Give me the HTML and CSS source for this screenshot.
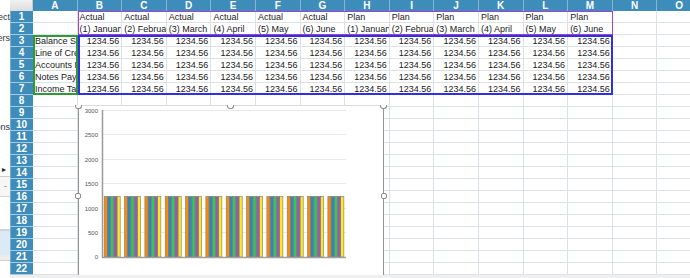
FILE: index.html
```html
<!DOCTYPE html>
<html>
<head>
<meta charset="utf-8">
<link rel="stylesheet" href="styles.css">
</head>
<body>
<div class="app">
  <aside class="side">
    <div class="gap g11"></div>
    <div class="frag"><span>Select</span></div>
    <div class="gap g9"></div>
    <div class="frag"><span>Filters</span></div>
    <div class="gap g77"></div>
    <div class="frag"><span>Options</span></div>
    <div class="gap g30"></div>
    <div class="arrow">&#9656;</div>
    <div class="pane-grey"><span class="dash"></span></div>
    <div class="pane-white"></div>
    <div class="pane-blue"></div>
    <div class="pane-light"></div>
  </aside>
  <main class="sheet">
    <div class="stack">
      <div class="grid cells">
        <div class="corner"></div>
        <div class="hd">A</div><div class="hd">B</div><div class="hd">C</div><div class="hd">D</div><div class="hd">E</div><div class="hd">F</div><div class="hd">G</div><div class="hd">H</div><div class="hd">I</div><div class="hd">J</div><div class="hd">K</div><div class="hd">L</div><div class="hd">M</div><div class="hd">N</div><div class="hd">O</div>

        <div class="rh">1</div>
        <div class="c"></div>
        <div class="c">Actual</div><div class="c">Actual</div><div class="c">Actual</div><div class="c">Actual</div><div class="c">Actual</div><div class="c">Actual</div>
        <div class="c">Plan</div><div class="c">Plan</div><div class="c">Plan</div><div class="c">Plan</div><div class="c">Plan</div><div class="c">Plan</div>
        <div class="c"></div><div class="c"></div>

        <div class="rh">2</div>
        <div class="c"></div>
        <div class="c">(1) January</div><div class="c">(2) February</div><div class="c">(3) March</div><div class="c">(4) April</div><div class="c">(5) May</div><div class="c">(6) June</div>
        <div class="c">(1) January</div><div class="c">(2) February</div><div class="c">(3) March</div><div class="c">(4) April</div><div class="c">(5) May</div><div class="c">(6) June</div>
        <div class="c"></div><div class="c"></div>

        <div class="rh">3</div>
        <div class="c">Balance Sheet</div>
        <div class="c num">1234.56</div><div class="c num">1234.56</div><div class="c num">1234.56</div><div class="c num">1234.56</div><div class="c num">1234.56</div><div class="c num">1234.56</div><div class="c num">1234.56</div><div class="c num">1234.56</div><div class="c num">1234.56</div><div class="c num">1234.56</div><div class="c num">1234.56</div><div class="c num">1234.56</div>
        <div class="c"></div><div class="c"></div>

        <div class="rh">4</div>
        <div class="c">Line of Credit</div>
        <div class="c num">1234.56</div><div class="c num">1234.56</div><div class="c num">1234.56</div><div class="c num">1234.56</div><div class="c num">1234.56</div><div class="c num">1234.56</div><div class="c num">1234.56</div><div class="c num">1234.56</div><div class="c num">1234.56</div><div class="c num">1234.56</div><div class="c num">1234.56</div><div class="c num">1234.56</div>
        <div class="c"></div><div class="c"></div>

        <div class="rh">5</div>
        <div class="c">Accounts Payable</div>
        <div class="c num">1234.56</div><div class="c num">1234.56</div><div class="c num">1234.56</div><div class="c num">1234.56</div><div class="c num">1234.56</div><div class="c num">1234.56</div><div class="c num">1234.56</div><div class="c num">1234.56</div><div class="c num">1234.56</div><div class="c num">1234.56</div><div class="c num">1234.56</div><div class="c num">1234.56</div>
        <div class="c"></div><div class="c"></div>

        <div class="rh">6</div>
        <div class="c">Notes Payable</div>
        <div class="c num">1234.56</div><div class="c num">1234.56</div><div class="c num">1234.56</div><div class="c num">1234.56</div><div class="c num">1234.56</div><div class="c num">1234.56</div><div class="c num">1234.56</div><div class="c num">1234.56</div><div class="c num">1234.56</div><div class="c num">1234.56</div><div class="c num">1234.56</div><div class="c num">1234.56</div>
        <div class="c"></div><div class="c"></div>

        <div class="rh">7</div>
        <div class="c">Income Tax</div>
        <div class="c num">1234.56</div><div class="c num">1234.56</div><div class="c num">1234.56</div><div class="c num">1234.56</div><div class="c num">1234.56</div><div class="c num">1234.56</div><div class="c num">1234.56</div><div class="c num">1234.56</div><div class="c num">1234.56</div><div class="c num">1234.56</div><div class="c num">1234.56</div><div class="c num">1234.56</div>
        <div class="c"></div><div class="c"></div>

        <div class="rh">8</div><div class="c"></div><div class="c"></div><div class="c"></div><div class="c"></div><div class="c"></div><div class="c"></div><div class="c"></div><div class="c"></div><div class="c"></div><div class="c"></div><div class="c"></div><div class="c"></div><div class="c"></div><div class="c"></div><div class="c"></div>
        <div class="rh">9</div><div class="c"></div><div class="c"></div><div class="c"></div><div class="c"></div><div class="c"></div><div class="c"></div><div class="c"></div><div class="c"></div><div class="c"></div><div class="c"></div><div class="c"></div><div class="c"></div><div class="c"></div><div class="c"></div><div class="c"></div>
        <div class="rh">10</div><div class="c"></div><div class="c"></div><div class="c"></div><div class="c"></div><div class="c"></div><div class="c"></div><div class="c"></div><div class="c"></div><div class="c"></div><div class="c"></div><div class="c"></div><div class="c"></div><div class="c"></div><div class="c"></div><div class="c"></div>
        <div class="rh">11</div><div class="c"></div><div class="c"></div><div class="c"></div><div class="c"></div><div class="c"></div><div class="c"></div><div class="c"></div><div class="c"></div><div class="c"></div><div class="c"></div><div class="c"></div><div class="c"></div><div class="c"></div><div class="c"></div><div class="c"></div>
        <div class="rh">12</div><div class="c"></div><div class="c"></div><div class="c"></div><div class="c"></div><div class="c"></div><div class="c"></div><div class="c"></div><div class="c"></div><div class="c"></div><div class="c"></div><div class="c"></div><div class="c"></div><div class="c"></div><div class="c"></div><div class="c"></div>
        <div class="rh">13</div><div class="c"></div><div class="c"></div><div class="c"></div><div class="c"></div><div class="c"></div><div class="c"></div><div class="c"></div><div class="c"></div><div class="c"></div><div class="c"></div><div class="c"></div><div class="c"></div><div class="c"></div><div class="c"></div><div class="c"></div>
        <div class="rh">14</div><div class="c"></div><div class="c"></div><div class="c"></div><div class="c"></div><div class="c"></div><div class="c"></div><div class="c"></div><div class="c"></div><div class="c"></div><div class="c"></div><div class="c"></div><div class="c"></div><div class="c"></div><div class="c"></div><div class="c"></div>
        <div class="rh">15</div><div class="c"></div><div class="c"></div><div class="c"></div><div class="c"></div><div class="c"></div><div class="c"></div><div class="c"></div><div class="c"></div><div class="c"></div><div class="c"></div><div class="c"></div><div class="c"></div><div class="c"></div><div class="c"></div><div class="c"></div>
        <div class="rh">16</div><div class="c"></div><div class="c"></div><div class="c"></div><div class="c"></div><div class="c"></div><div class="c"></div><div class="c"></div><div class="c"></div><div class="c"></div><div class="c"></div><div class="c"></div><div class="c"></div><div class="c"></div><div class="c"></div><div class="c"></div>
        <div class="rh">17</div><div class="c"></div><div class="c"></div><div class="c"></div><div class="c"></div><div class="c"></div><div class="c"></div><div class="c"></div><div class="c"></div><div class="c"></div><div class="c"></div><div class="c"></div><div class="c"></div><div class="c"></div><div class="c"></div><div class="c"></div>
        <div class="rh">18</div><div class="c"></div><div class="c"></div><div class="c"></div><div class="c"></div><div class="c"></div><div class="c"></div><div class="c"></div><div class="c"></div><div class="c"></div><div class="c"></div><div class="c"></div><div class="c"></div><div class="c"></div><div class="c"></div><div class="c"></div>
        <div class="rh">19</div><div class="c"></div><div class="c"></div><div class="c"></div><div class="c"></div><div class="c"></div><div class="c"></div><div class="c"></div><div class="c"></div><div class="c"></div><div class="c"></div><div class="c"></div><div class="c"></div><div class="c"></div><div class="c"></div><div class="c"></div>
        <div class="rh">20</div><div class="c"></div><div class="c"></div><div class="c"></div><div class="c"></div><div class="c"></div><div class="c"></div><div class="c"></div><div class="c"></div><div class="c"></div><div class="c"></div><div class="c"></div><div class="c"></div><div class="c"></div><div class="c"></div><div class="c"></div>
        <div class="rh">21</div><div class="c"></div><div class="c"></div><div class="c"></div><div class="c"></div><div class="c"></div><div class="c"></div><div class="c"></div><div class="c"></div><div class="c"></div><div class="c"></div><div class="c"></div><div class="c"></div><div class="c"></div><div class="c"></div><div class="c"></div>
        <div class="rh">22</div><div class="c"></div><div class="c"></div><div class="c"></div><div class="c"></div><div class="c"></div><div class="c"></div><div class="c"></div><div class="c"></div><div class="c"></div><div class="c"></div><div class="c"></div><div class="c"></div><div class="c"></div><div class="c"></div><div class="c"></div>
      </div>

      <div class="grid ranges">
        <div class="range r-purple"></div>
        <div class="range r-blue"></div>
        <div class="range r-green"></div>
      </div>

      <div class="chart">
        <span class="handle top h-left"></span>
        <span class="handle top h-mid"></span>
        <span class="handle top h-right"></span>
        <span class="handle side-h h-left2"></span>
        <span class="handle side-h h-right2"></span>
        <svg class="chart-svg" width="304" height="168" viewBox="0 0 304 168">
          <defs>
            <g id="grp">
              <rect x="0" y="90.5" width="3.2" height="60.5" fill="#ff8a00"/>
              <rect x="3.2" y="90.5" width="3.2" height="60.5" fill="#2f86c0"/>
              <rect x="6.4" y="90.5" width="3.2" height="60.5" fill="#2ecc55"/>
              <rect x="9.6" y="90.5" width="3.2" height="60.5" fill="#9b59b6"/>
              <rect x="12.8" y="90.5" width="3.2" height="60.5" fill="#ffe81a"/>
              <g fill="none" stroke="#7a7a7a" stroke-width="0.6">
                <rect x="0" y="90.5" width="3.2" height="60.5"/>
                <rect x="3.2" y="90.5" width="3.2" height="60.5"/>
                <rect x="6.4" y="90.5" width="3.2" height="60.5"/>
                <rect x="9.6" y="90.5" width="3.2" height="60.5"/>
                <rect x="12.8" y="90.5" width="3.2" height="60.5"/>
              </g>
            </g>
          </defs>
          <g stroke="#e6e9ef" stroke-width="1">
            <line x1="23" y1="4.5" x2="267" y2="4.5"/>
            <line x1="23" y1="28.5" x2="267" y2="28.5"/>
            <line x1="23" y1="53.5" x2="267" y2="53.5"/>
            <line x1="23" y1="77.5" x2="267" y2="77.5"/>
            <line x1="23" y1="102.5" x2="267" y2="102.5"/>
            <line x1="23" y1="126.5" x2="267" y2="126.5"/>
          </g>
          <g class="ylab" text-anchor="end">
            <text x="19" y="6.5">3000</text>
            <text x="19" y="30.5">2500</text>
            <text x="19" y="55.5">2000</text>
            <text x="19" y="79.5">1500</text>
            <text x="19" y="104.5">1000</text>
            <text x="19" y="128.5">500</text>
            <text x="19" y="153">0</text>
          </g>
          <use href="#grp" x="25.2"/>
          <use href="#grp" x="45.53"/>
          <use href="#grp" x="65.87"/>
          <use href="#grp" x="86.2"/>
          <use href="#grp" x="106.53"/>
          <use href="#grp" x="126.87"/>
          <use href="#grp" x="147.2"/>
          <use href="#grp" x="167.53"/>
          <use href="#grp" x="187.87"/>
          <use href="#grp" x="208.2"/>
          <use href="#grp" x="228.53"/>
          <use href="#grp" x="248.87"/>
          <line x1="23" y1="151.5" x2="267" y2="151.5" stroke="#a0a0a0" stroke-width="1.5"/>
          <line x1="23.5" y1="4" x2="23.5" y2="152" stroke="#9a9a9a" stroke-width="1.5"/>
        </svg>
      </div>
    </div>
    <div class="hscroll"></div>
  </main>
</div>
</body>
</html>
```

FILE: styles.css
```css
* { box-sizing: border-box; }

html, body {
  margin: 0;
  padding: 0;
  background: #ffffff;
  overflow: hidden;
}

.app {
  display: flex;
  width: 690px;
  height: 278px;
  overflow: hidden;
  font-family: "Liberation Sans", Arial, sans-serif;
}

/* left sliver of a side panel */
.side {
  width: 10px;
  flex: none;
  display: flex;
  flex-direction: column;
  overflow: hidden;
  background: #ffffff;
  font-size: 9px;
  color: #333;
}
.gap { flex: none; }
.g11 { height: 11px; }
.g9 { height: 9px; }
.g77 { height: 77px; }
.g30 { height: 30px; }

.frag {
  height: 12px;
  line-height: 12px;
  display: flex;
  justify-content: flex-end;
  white-space: nowrap;
  overflow: hidden;
}

.arrow {
  height: 13px;
  line-height: 13px;
  font-size: 8px;
  color: #222;
  padding-left: 2px;
}

.pane-grey {
  height: 21px;
  border-top: 1px solid #cfcfcf;
  border-bottom: 1px solid #d6d6d6;
  background: #f6f6f6;
  display: flex;
  align-items: center;
  padding-left: 4px;
}
.dash {
  width: 3px;
  height: 1px;
  background: #b0b0b0;
}
.pane-white {
  height: 34px;
  border-bottom: 2px solid #d4d4d4;
}
.pane-blue {
  height: 24px;
  background: #dce9f7;
}
.pane-light {
  height: 6px;
  background: #ececec;
  border-bottom: 1px solid #d0d0d0;
}

/* sheet */
.sheet {
  flex: none;
  display: flex;
  flex-direction: column;
  width: 680px;
  overflow: hidden;
}

.stack {
  position: relative;
  display: grid;
  height: 275px;
}
.stack > .grid { grid-area: 1 / 1; }

.grid {
  display: grid;
  grid-template-columns: 23px repeat(15, 44.6px);
  grid-template-rows: 11px repeat(22, 12px);
}

.corner {
  background: linear-gradient(#f2f2f2, #dcdcdc);
  border-right: 1px solid #c9c9c9;
}

.hd {
  background: #3e8cb9;
  color: #ffffff;
  font-weight: bold;
  font-size: 10px;
  line-height: 11px;
  text-align: center;
  border-right: 1px solid #86b6d4;
}

.rh {
  background: #3e8cb9;
  color: #ffffff;
  font-weight: bold;
  font-size: 10px;
  line-height: 11px;
  text-align: center;
  border-bottom: 1px solid #a6cae0;
  box-shadow: inset 1px 0 0 #79abcc;
}

.c {
  background: #ffffff;
  border-right: 1px solid #dce1e9;
  border-bottom: 1px solid #dce1e9;
  font-size: 9px;
  line-height: 12px;
  color: #1a1a1a;
  padding: 0 2px;
  white-space: nowrap;
  overflow: hidden;
}
.num {
  text-align: right;
  padding-right: 2px;
}

/* formula range highlights */
.ranges { pointer-events: none; }
.range { border: 2px solid; }
.r-purple {
  grid-column: 3 / 15;
  grid-row: 2 / 4;
  border-color: #a43fd3;
  border-width: 1.5px;
}
.r-blue {
  grid-column: 3 / 15;
  grid-row: 4 / 9;
  border-color: #2f2fe6;
}
.r-green {
  grid-column: 2 / 3;
  grid-row: 4 / 9;
  border-color: #2e9a35;
}

/* embedded chart */
.chart {
  position: absolute;
  left: 68px;
  top: 105px;
  width: 306px;
  height: 170px;
  background: #ffffff;
  border-left: 1px solid #959595;
  border-right: 1px solid #959595;
  border-top: 1px solid #dadada;
  z-index: 2;
}
.chart-svg { display: block; }
.ylab text {
  font-family: "Liberation Sans", Arial, sans-serif;
  font-size: 6px;
  fill: #555555;
}

.handle {
  position: absolute;
  background: #ffffff;
  border: 1px solid #8c8c8c;
}
.handle.top {
  top: -1px;
  width: 7px;
  height: 4px;
  border-top: none;
  border-radius: 0 0 3px 3px;
}
.h-left { left: -4px; }
.h-mid { left: 148px; }
.h-right { right: -4px; }
.handle.side-h {
  top: 87px;
  width: 6px;
  height: 6px;
  border-radius: 2px;
}
.h-left2 { left: -4px; }
.h-right2 { right: -4px; }

.hscroll {
  height: 3px;
  background: #efefef;
}
```
